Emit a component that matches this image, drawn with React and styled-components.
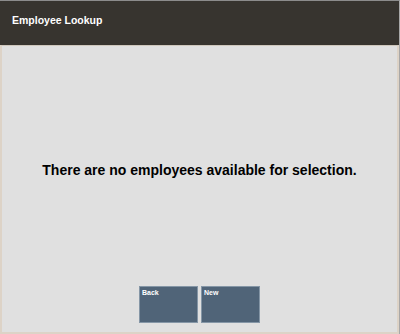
import React from "react";
import styled, { createGlobalStyle } from "styled-components";

const Global = createGlobalStyle`
  html, body {
    margin: 0;
    padding: 0;
    background: #e0e0e0;
  }
`;

const Frame = styled.div`
  width: 400px;
  height: 334px;
  box-sizing: border-box;
  display: flex;
  flex-direction: column;
  font-family: "Liberation Sans", Arial, sans-serif;
  border-top: 1px solid #8c8c8c;
  border-right: 1px solid #a8a8a8;
  background: #e0e0e0;
`;

const Header = styled.div`
  height: 44px;
  box-sizing: border-box;
  flex-shrink: 0;
  padding: 13px 0 0 12px;
  background: #37342f;
  color: #ffffff;
  font-size: 10.5px;
  font-weight: bold;
`;

const Body = styled.div`
  flex: 1;
  display: flex;
  flex-direction: column;
  border: 2px solid #ddd3c7;
  border-top: 1px solid #cfc7bc;
  background: #e0e0e0;
`;

const Message = styled.div`
  flex: 1;
  display: flex;
  align-items: center;
  justify-content: center;
  padding-top: 8px;
  color: #000;
  font-size: 14px;
  font-weight: bold;
`;

const ButtonRow = styled.div`
  display: flex;
  justify-content: center;
  gap: 3px;
  padding-bottom: 9px;
`;

const Action = styled.button`
  width: 59px;
  height: 37px;
  box-sizing: border-box;
  border: 1px solid #8596a6;
  background: #506478;
  color: #ffffff;
  font-family: inherit;
  font-size: 7px;
  font-weight: bold;
  text-align: left;
  display: flex;
  align-items: flex-start;
  padding: 2px 2px;
  cursor: pointer;
`;

export default function App() {
  return (
    <>
      <Global />
      <Frame>
        <Header>Employee Lookup</Header>
        <Body>
          <Message>There are no employees available for selection.</Message>
          <ButtonRow>
            <Action>Back</Action>
            <Action>New</Action>
          </ButtonRow>
        </Body>
      </Frame>
    </>
  );
}
